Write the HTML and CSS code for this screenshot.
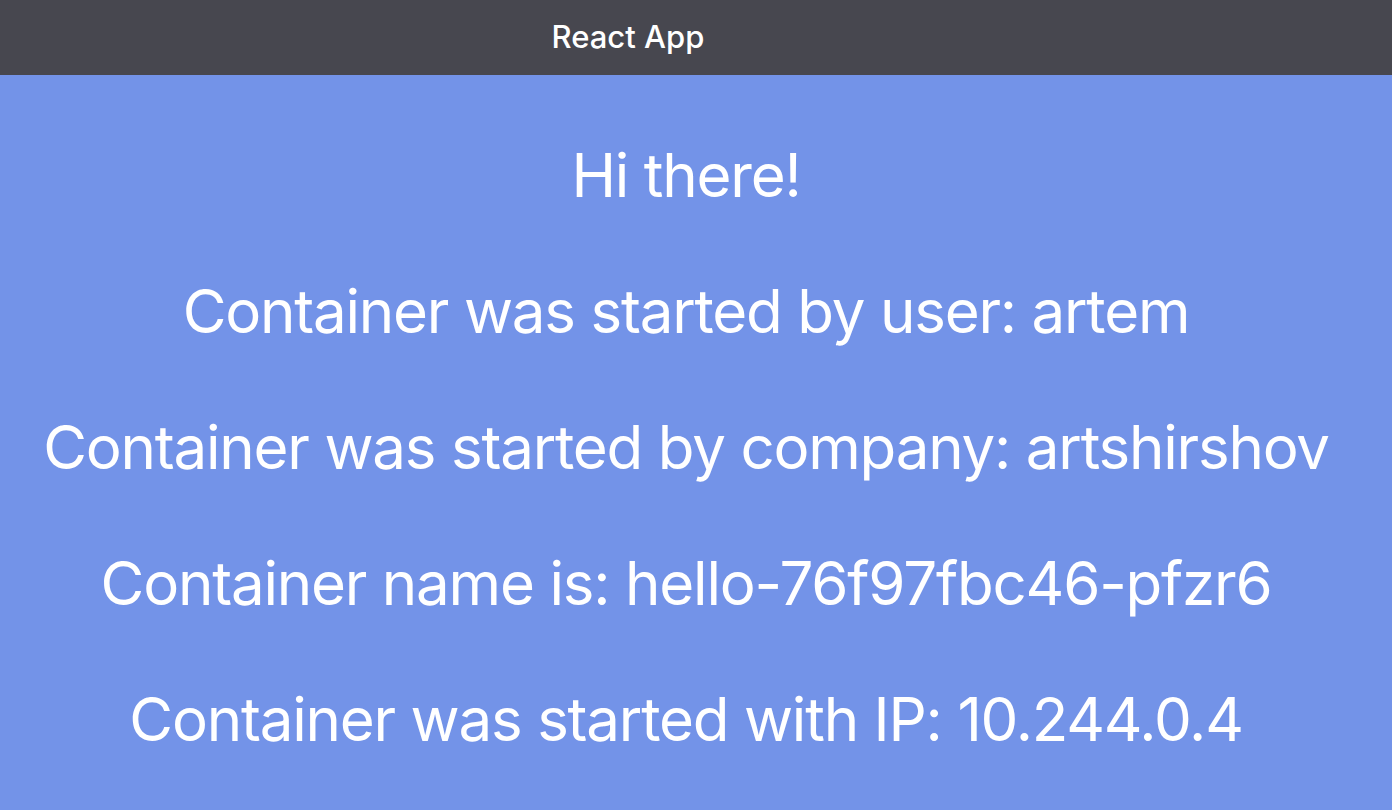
FILE: index.html
```html
<!DOCTYPE html>
<html>
<head>
<meta charset="utf-8">
<title>React App</title>
<link rel="stylesheet" href="styles.css">
</head>
<body>
<header class="titlebar"><span class="title">React App</span></header>
<main class="app">
  <p class="line">Hi there!</p>
  <p class="line">Container was started by user: artem</p>
  <p class="line">Container was started by company: artshirshov</p>
  <p class="line">Container name is: hello-76f97fbc46-pfzr6</p>
  <p class="line">Container was started with IP: 10.244.0.4</p>
</main>
</body>
</html>
```

FILE: styles.css
```css
html, body {
  margin: 0;
  padding: 0;
  height: 100%;
}
body {
  font-family: Inter, "Noto Sans", sans-serif;
  background: #7393e8;
  overflow: hidden;
}
.titlebar {
  height: 75px;
  background: #47474f;
  display: flex;
  align-items: center;
  justify-content: center;
  padding-right: 136px;
}
.title {
  color: #ffffff;
  font-size: 31px;
  font-weight: 500;
  padding-bottom: 2px;
}
.app {
  padding: 32px 20px 0 0;
  text-align: center;
  color: #ffffff;
}
.line {
  margin: 0;
  font-size: 60px;
  line-height: 136px;
  letter-spacing: -1.2px;
}
```
